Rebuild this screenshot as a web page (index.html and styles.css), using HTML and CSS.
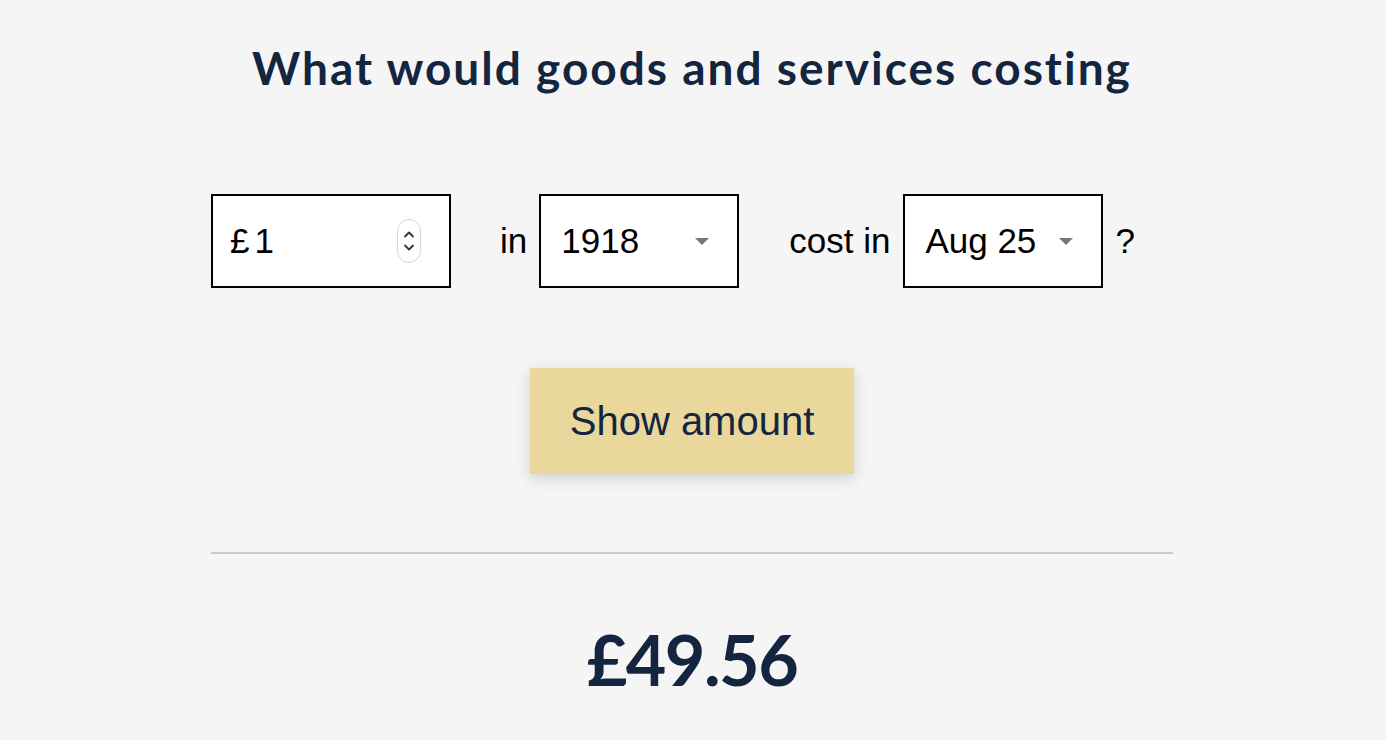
FILE: index.html
```html
<!DOCTYPE html>
<html lang="en">
<head>
<meta charset="utf-8">
<title>Inflation calculator</title>
<link rel="stylesheet" href="styles.css">
</head>
<body>
<main class="calc">
  <h1 class="calc-title">What would goods and services costing</h1>
  <form class="calc-form">
    <div class="field amount-field">
      <span class="amount-value"><span class="currency">£</span>1</span>
      <span class="spinner">
        <svg width="24" height="44" viewBox="0 0 24 44" aria-hidden="true">
          <rect x="0.5" y="0.5" width="23" height="43" rx="11.5" fill="#fff" stroke="#d6d6d6"/>
          <path d="M8 17.5 L12 13.5 L16 17.5" fill="none" stroke="#333" stroke-width="1.8" stroke-linecap="round" stroke-linejoin="round"/>
          <path d="M8 26.5 L12 30.5 L16 26.5" fill="none" stroke="#333" stroke-width="1.8" stroke-linecap="round" stroke-linejoin="round"/>
        </svg>
      </span>
    </div>
    <span class="label">in</span>
    <div class="field select-field">
      <span>1918</span>
      <span class="caret"></span>
    </div>
    <span class="label label-wide">cost in</span>
    <div class="field select-field">
      <span>Aug 25</span>
      <span class="caret"></span>
    </div>
    <span class="label label-end">?</span>
  </form>
  <div class="actions">
    <button type="button" class="show-btn">Show amount</button>
  </div>
  <hr class="divider">
  <p class="result">£49.56</p>
</main>
</body>
</html>
```
FILE: styles.css
```css
html, body {
  margin: 0;
  padding: 0;
}
body {
  background: #f5f5f5;
  font-family: "Liberation Sans", Arial, sans-serif;
  color: #000;
}
.calc {
  width: 962px;
  margin: 0 auto;
  padding: 40px 2px 0 0;
}
.calc-title {
  margin: 0;
  font-family: Lato, "Noto Sans", sans-serif;
  font-weight: 700;
  font-size: 46px;
  line-height: 56px;
  letter-spacing: 2px;
  text-align: center;
  color: #13253f;
}
.calc-form {
  display: flex;
  align-items: center;
  margin-top: 98px;
  font-size: 35px;
}
.field {
  box-sizing: border-box;
  height: 94px;
  border: 2px solid #000;
  background: #fff;
  display: flex;
  align-items: center;
}
.amount-field {
  width: 240px;
  padding: 0 28px 0 17px;
  justify-content: space-between;
}
.currency {
  margin-right: 5px;
}
.spinner {
  display: flex;
}
.select-field {
  width: 200px;
  padding: 0 28px 0 20px;
  justify-content: space-between;
}
.caret {
  width: 0;
  height: 0;
  border-left: 7px solid transparent;
  border-right: 7px solid transparent;
  border-top: 7px solid #777;
}
.label {
  margin: 0 12px 0 49px;
}
.label-wide {
  margin: 0 13px 0 50px;
}
.label-end {
  margin: 0 0 0 12px;
}
.actions {
  display: flex;
  justify-content: center;
  margin-top: 80px;
}
.show-btn {
  width: 324px;
  height: 106px;
  border: 0;
  background: #e9d79b;
  color: #13253f;
  font-family: "Liberation Sans", Arial, sans-serif;
  font-size: 40px;
  box-shadow: 0 4px 14px rgba(0, 0, 0, 0.16);
  cursor: pointer;
}
.divider {
  margin: 78px 0 0;
  border: 0;
  border-top: 2px solid #cacaca;
  height: 0;
}
.result {
  margin: 63px 0 0;
  text-align: center;
  font-family: Lato, "Noto Sans", sans-serif;
  font-weight: 700;
  font-size: 70px;
  line-height: 84px;
  letter-spacing: -1.5px;
  color: #13253f;
}
```
